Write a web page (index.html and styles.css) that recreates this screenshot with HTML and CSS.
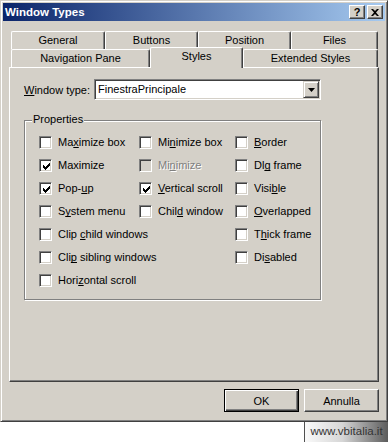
FILE: index.html
```html
<!DOCTYPE html>
<html lang="it">
<head>
  <meta charset="UTF-8" />
  <title>Window Types</title>
  <link rel="stylesheet" href="styles.css">
</head>
<body>

  <!-- Dialog window -->
  <div class="window">
    <div class="titlebar">
      <span class="title">Window Types</span>
      <div class="title-btns">
        <span class="tbtn help">?</span>
        <span class="tbtn close">
          <svg width="8" height="7" viewBox="0 0 8 7">
            <path d="M0 0h2l2 2 2-2h2L5 3.5 8 7H6L4 5 2 7H0l3-3.5z" fill="#000"/>
          </svg>
        </span>
      </div>
    </div>

    <div class="client">
      <!-- Tabs -->
      <div class="tabrow">
        <span class="tab" style="width:94px">General</span>
        <span class="tab" style="width:93px">Buttons</span>
        <span class="tab" style="width:93px">Position</span>
        <span class="tab" style="width:87px">Files</span>
      </div>
      <div class="tabrow front">
        <span class="tab" style="width:139px">Navigation Pane</span>
        <span class="tab selected" style="width:93px">Styles</span>
        <span class="tab" style="width:135px">Extended Styles</span>
      </div>

      <!-- Tab page -->
      <div class="panel">
        <div class="field-row">
          <span class="field-label"><u>W</u>indow type:</span>
          <div class="combo">
            <span class="combo-text">FinestraPrincipale</span>
            <span class="combo-btn">
              <svg width="7" height="4" viewBox="0 0 7 4"><path d="M0 0h7L3.5 4z" fill="#000"/></svg>
            </span>
          </div>
        </div>

        <div class="group">
          <span class="legend">Properties</span>
          <div class="cols">
            <div class="col col1">
              <div class="check"><span class="box"></span><span class="lbl">Ma<u>x</u>imize box</span></div>
              <div class="check"><span class="box on"><svg width="7" height="7" viewBox="0 0 7 7"><path d="M0 2h1v3H0zM1 3h1v3H1zM2 4h1v3H2zM3 3h1v3H3zM4 2h1v3H4zM5 1h1v3H5zM6 0h1v3H6z" fill="#000"/></svg></span><span class="lbl">Maximize</span></div>
              <div class="check"><span class="box on"><svg width="7" height="7" viewBox="0 0 7 7"><path d="M0 2h1v3H0zM1 3h1v3H1zM2 4h1v3H2zM3 3h1v3H3zM4 2h1v3H4zM5 1h1v3H5zM6 0h1v3H6z" fill="#000"/></svg></span><span class="lbl">Pop-<u>u</u>p</span></div>
              <div class="check"><span class="box"></span><span class="lbl">S<u>y</u>stem menu</span></div>
              <div class="check"><span class="box"></span><span class="lbl">Clip <u>c</u>hild windows</span></div>
              <div class="check"><span class="box"></span><span class="lbl">Cli<u>p</u> sibling windows</span></div>
              <div class="check"><span class="box"></span><span class="lbl">Hori<u>z</u>ontal scroll</span></div>
            </div>
            <div class="col col2">
              <div class="check"><span class="box"></span><span class="lbl">Mi<u>n</u>imize box</span></div>
              <div class="check disabled"><span class="box"></span><span class="lbl">Mi<u>n</u>imize</span></div>
              <div class="check"><span class="box on"><svg width="7" height="7" viewBox="0 0 7 7"><path d="M0 2h1v3H0zM1 3h1v3H1zM2 4h1v3H2zM3 3h1v3H3zM4 2h1v3H4zM5 1h1v3H5zM6 0h1v3H6z" fill="#000"/></svg></span><span class="lbl"><u>V</u>ertical scroll</span></div>
              <div class="check"><span class="box"></span><span class="lbl">Chil<u>d</u> window</span></div>
            </div>
            <div class="col col3">
              <div class="check"><span class="box"></span><span class="lbl"><u>B</u>order</span></div>
              <div class="check"><span class="box"></span><span class="lbl">Dl<u>g</u> frame</span></div>
              <div class="check"><span class="box"></span><span class="lbl">Visi<u>b</u>le</span></div>
              <div class="check"><span class="box"></span><span class="lbl"><u>O</u>verlapped</span></div>
              <div class="check"><span class="box"></span><span class="lbl">T<u>h</u>ick frame</span></div>
              <div class="check"><span class="box"></span><span class="lbl">Di<u>s</u>abled</span></div>
            </div>
          </div>
        </div>
      </div>

      <!-- Dialog buttons -->
      <div class="buttons">
        <button class="btn default">OK</button>
        <button class="btn">Annulla</button>
      </div>
    </div>
  </div>

  <div class="watermark">www.vbitalia.it</div>

</body>
</html>
```

FILE: styles.css
```css
/* --------------------------------
   Reset / Basic
----------------------------------- */
* {
  margin: 0;
  padding: 0;
  box-sizing: border-box;
}
html, body {
  font-family: 'Liberation Sans', Arial, sans-serif;
  font-size: 11px;
  color: #000;
  background: #fff;
}
u {
  text-decoration-skip-ink: none;
}

/* --------------------------------
   Window frame
----------------------------------- */
.window {
  width: 388px;
  background: #d4d0c8;
  border: 1px solid;
  border-color: #d4d0c8 #404040 #404040 #d4d0c8;
  padding: 2px;
  box-shadow: inset 1px 1px #fff, inset -1px -1px #808080;
}
.titlebar {
  height: 18px;
  display: flex;
  align-items: center;
  justify-content: space-between;
  padding: 0 2px;
  background: linear-gradient(to right, #0a246a, #a6caf0);
}
.title {
  color: #fff;
  font-weight: bold;
  font-size: 11.5px;
  line-height: 18px;
}
.title-btns {
  display: flex;
  gap: 2px;
}
.tbtn {
  width: 16px;
  height: 14px;
  display: flex;
  align-items: center;
  justify-content: center;
  background: #d4d0c8;
  border: 1px solid;
  border-color: #fff #404040 #404040 #fff;
  box-shadow: inset -1px -1px #808080;
}
.tbtn.help {
  font-weight: bold;
  font-size: 11px;
  line-height: 12px;
}

/* --------------------------------
   Client area
----------------------------------- */
.client {
  padding: 10px 6px 7px 6px;
}

/* Tabs */
.tabrow {
  display: flex;
  align-items: flex-end;
  height: 18px;
  padding-left: 2px;
}
.tab {
  height: 18px;
  text-align: center;
  line-height: 17px;
  white-space: nowrap;
  border-top: 1px solid #fff;
  border-left: 1px solid #fff;
  border-right: 1px solid #404040;
  border-radius: 2px 2px 0 0;
  box-shadow: inset -1px 0 #808080;
  background: #d4d0c8;
}
.tab.selected {
  position: relative;
  z-index: 1;
  height: 21px;
  margin-top: -2px;
  margin-bottom: -1px;
}

/* Tab page */
.panel {
  height: 315px;
  border: 1px solid;
  border-color: #fff #404040 #404040 #fff;
  box-shadow: inset -1px -1px #808080;
  padding: 11px 0 0 14px;
}
.field-row {
  display: flex;
  align-items: center;
  height: 21px;
}
.field-label {
  width: 70px;
  white-space: nowrap;
}
.combo {
  width: 227px;
  height: 21px;
  display: flex;
  background: #fff;
  border: 1px solid;
  border-color: #808080 #fff #fff #808080;
  box-shadow: inset 1px 1px #404040, inset -1px -1px #d4d0c8;
  padding: 1px;
}
.combo-text {
  flex: 1;
  padding-left: 2px;
  line-height: 17px;
}
.combo-btn {
  width: 16px;
  height: 17px;
  display: flex;
  align-items: center;
  justify-content: center;
  background: #d4d0c8;
  border: 1px solid;
  border-color: #d4d0c8 #404040 #404040 #d4d0c8;
  box-shadow: inset 1px 1px #fff, inset -1px -1px #808080;
}

/* Group box */
.group {
  width: 297px;
  height: 180px;
  margin-top: 20px;
  border: 1px solid #808080;
  box-shadow: inset 1px 1px #fff, 1px 1px #fff;
}
.legend {
  display: block;
  width: fit-content;
  margin: -8px 0 0 7px;
  padding: 0 1px;
  line-height: 13px;
  background: #d4d0c8;
}
.cols {
  display: flex;
  margin-top: 10px;
  padding-left: 14px;
}
.col {
  display: flex;
  flex-direction: column;
  gap: 10px;
}
.col1 { width: 100px; }
.col2 { width: 96px; }

/* Checkboxes */
.check {
  display: flex;
  align-items: center;
  gap: 6px;
  height: 13px;
}
.box {
  width: 13px;
  height: 13px;
  flex: none;
  background: #fff;
  border: 1px solid;
  border-color: #808080 #fff #fff #808080;
  box-shadow: inset 1px 1px #404040, inset -1px -1px #d4d0c8;
  padding: 3px;
}
.box svg {
  display: block;
}
.lbl {
  line-height: 13px;
  white-space: nowrap;
}
.check.disabled .box {
  background: #d4d0c8;
}
.check.disabled .lbl {
  color: #808080;
  text-shadow: 1px 1px #fff;
}

/* --------------------------------
   Buttons
----------------------------------- */
.buttons {
  display: flex;
  justify-content: flex-end;
  gap: 5px;
  margin-top: 7px;
}
.btn {
  width: 75px;
  height: 23px;
  font-family: inherit;
  font-size: 11px;
  color: #000;
  background: #d4d0c8;
  border: 1px solid;
  border-color: #fff #404040 #404040 #fff;
  box-shadow: inset -1px -1px #808080;
}
.btn.default {
  border-color: #000;
  box-shadow: inset 1px 1px #fff, inset -1px -1px #404040, inset -2px -2px #808080;
}

/* --------------------------------
   Watermark
----------------------------------- */
.watermark {
  width: 84px;
  height: 20px;
  margin-left: auto;
  border-left: 1px solid #505050;
  background: linear-gradient(to right, #fafafa, #d6d6d6 45%, #5c5c5c);
  color: #333;
  font-size: 11.5px;
  line-height: 19px;
  text-align: center;
}
```
